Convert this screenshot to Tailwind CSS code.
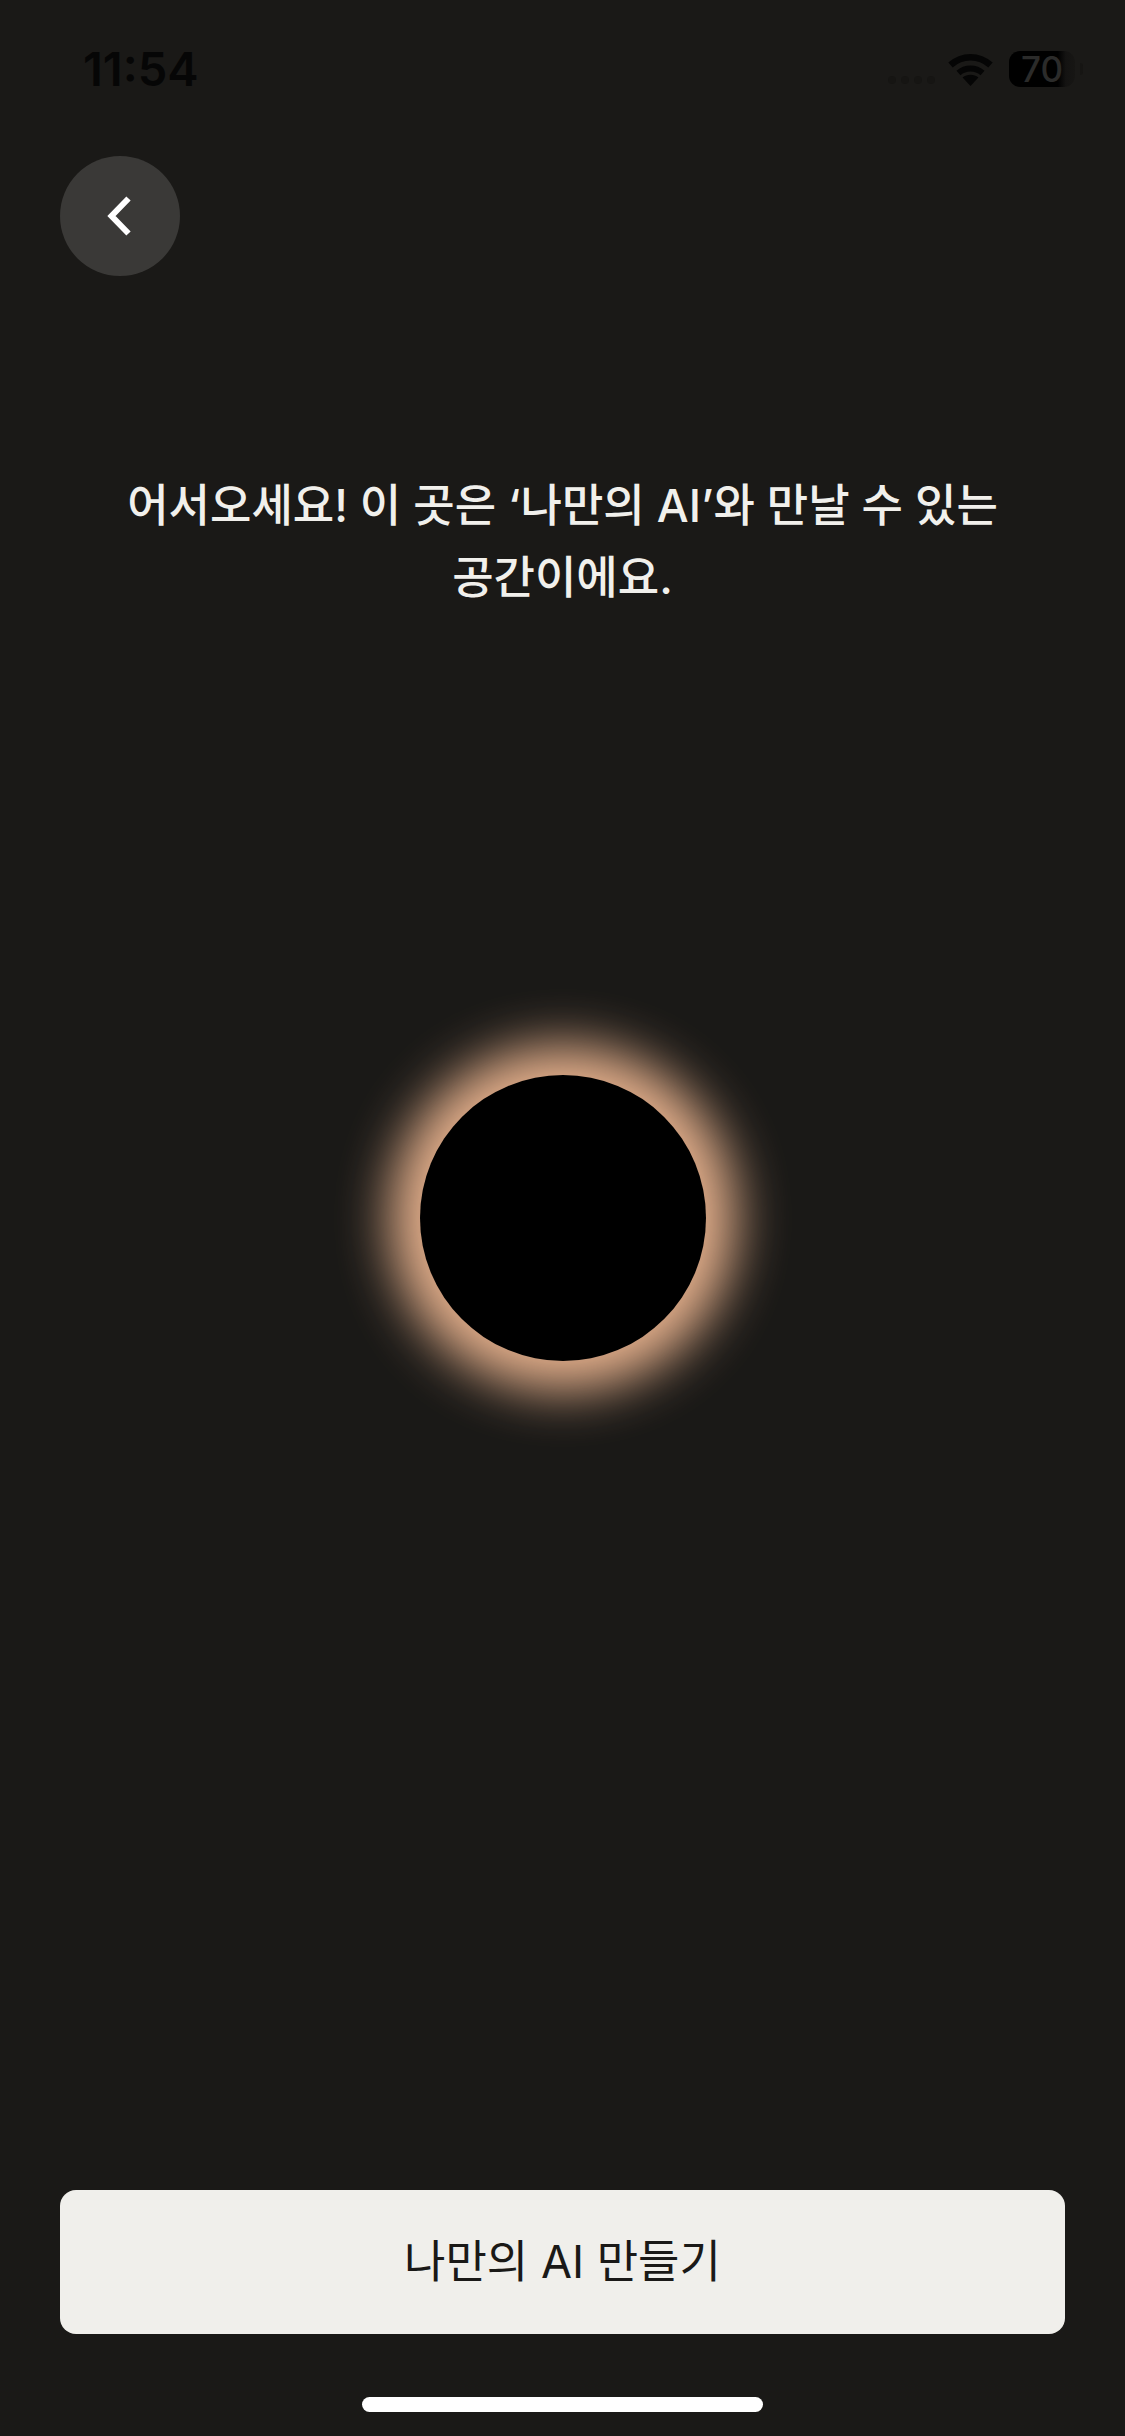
<!doctype html>
<html lang="ko">
<head>
<meta charset="utf-8">
<script src="https://cdn.jsdelivr.net/npm/@tailwindcss/browser@4"></script>
</head>
<body class="m-0">
<main class="flex h-[2436px] w-[1125px] flex-col overflow-hidden bg-[#1a1917] font-['Inter','Noto_Sans_CJK_KR',sans-serif]">
  <header class="flex h-[156px] items-start justify-between pt-[42px] pl-[83px] pr-[42px]">
    <span class="text-[47px] leading-[54px] font-semibold text-[#060606]">11:54</span>
    <div class="flex items-center pt-[9px]">
      <div class="mr-[13px] mt-[22px] flex gap-[5px]">
        <i class="size-[8px] rounded-full bg-[#161513]"></i><i class="size-[8px] rounded-full bg-[#161513]"></i><i class="size-[8px] rounded-full bg-[#161513]"></i><i class="size-[8px] rounded-full bg-[#161513]"></i>
      </div>
      <svg class="mr-[16px]" width="45" height="33" viewBox="0 0 45 33" fill="none" aria-hidden="true">
        <path d="M22.5 33 14.6 24.6C19 20.9 26 20.9 30.4 24.6Z" fill="#050505"/>
        <path d="M10.5 20C17.3 14 27.7 14 34.5 20" stroke="#050505" stroke-width="6"/>
        <path d="M2.5 12C14 1.5 31 1.5 42.5 12" stroke="#050505" stroke-width="6.5"/>
      </svg>
      <div class="flex h-[36px] w-[66px] items-center rounded-[11px] bg-[linear-gradient(90deg,#000_0%,#000_74%,#141312_86%,#171614_100%)] pl-[12px] text-[35px] leading-none font-medium text-[#2b2b2a]">70</div>
      <i class="ml-[5px] h-[12px] w-[3px] rounded-r-sm bg-[#161513]"></i>
    </div>
  </header>

  <button class="ml-[60px] flex size-[120px] items-center justify-center rounded-full bg-[#3a3937]" aria-label="뒤로">
    <svg width="30" height="42" viewBox="0 0 30 42" fill="none" aria-hidden="true">
      <path d="M23.5 3.5 6.5 21 23.5 38.5" stroke="#fff" stroke-width="6"/>
    </svg>
  </button>

  <h1 class="mt-[194px] text-center text-[45px] leading-[72px] font-medium text-[#f1f0ec]">어서오세요! 이 곳은 ‘나만의 AI’와 만날 수 있는<br>공간이에요.</h1>

  <div class="mx-auto mt-[461px] size-[286px] shrink-0 rounded-full bg-black shadow-[0_0_52px_30px_#e5b08c]"></div>

  <button class="mx-[60px] mt-auto flex h-[144px] shrink-0 items-center justify-center rounded-[16px] bg-[#f0efeb] text-[45px] font-normal text-[#1a1917]">나만의 AI 만들기</button>

  <div class="mx-auto mt-[63px] mb-[24px] h-[15px] w-[401px] shrink-0 rounded-full bg-white"></div>
</main>
</body>
</html>
